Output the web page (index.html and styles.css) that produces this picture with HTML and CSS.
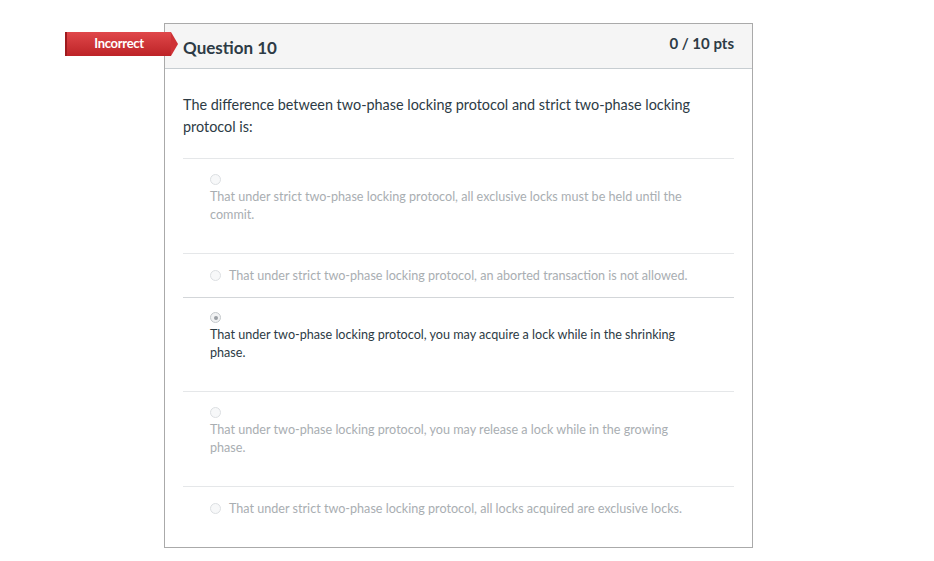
FILE: index.html
```html
<!DOCTYPE html>
<html>
<head>
<meta charset="utf-8">
<link rel="stylesheet" href="styles.css">
</head>
<body>
<div class="question">
  <div class="badge">Incorrect</div>
  <div class="q-header">
    <span class="q-title">Question 10</span>
    <span class="q-pts">0 / 10 pts</span>
  </div>
  <div class="q-body">
    <p class="q-text">The difference between two-phase locking protocol and strict two-phase locking protocol is:</p>
    <div class="answers">
      <div class="answer multi">
        <span class="radio"></span>
        <span class="label">That under strict two-phase locking protocol, all exclusive locks must be held until the commit.</span>
      </div>
      <div class="answer single">
        <span class="radio"></span>
        <span class="label">That under strict two-phase locking protocol, an aborted transaction is not allowed.</span>
      </div>
      <div class="answer multi selected">
        <span class="radio checked"></span>
        <span class="label">That under two-phase locking protocol, you may acquire a lock while in the shrinking phase.</span>
      </div>
      <div class="answer multi">
        <span class="radio"></span>
        <span class="label">That under two-phase locking protocol, you may release a lock while in the growing phase.</span>
      </div>
      <div class="answer single last">
        <span class="radio"></span>
        <span class="label">That under strict two-phase locking protocol, all locks acquired are exclusive locks.</span>
      </div>
    </div>
  </div>
</div>
</body>
</html>
```

FILE: styles.css
```css
html, body {
  margin: 0;
  padding: 0;
  background: #fff;
  font-family: Lato, "Open Sans", sans-serif;
  color: #2d3b45;
}

.question {
  position: relative;
  margin: 23px 0 0 164px;
  width: 587px;
  height: 523px;
  border: 1px solid #aaaaaa;
}

.badge {
  position: absolute;
  left: -100px;
  top: 8px;
  width: 106px;
  height: 24px;
  line-height: 23px;
  box-sizing: border-box;
  padding-left: 0;
  text-align: center;
  color: #fff;
  font-size: 13px;
  font-weight: 700;
  letter-spacing: -0.3px;
  background: linear-gradient(#e0474a, #bd2327);
  border-left: 2px solid #9e1a1e;
}

.badge::after {
  content: "";
  position: absolute;
  right: -7px;
  top: 0;
  width: 0;
  height: 0;
  border-top: 12px solid transparent;
  border-bottom: 12px solid transparent;
  border-left: 7px solid #cf3236;
}

.q-header {
  display: flex;
  justify-content: space-between;
  align-items: flex-start;
  height: 45px;
  box-sizing: border-box;
  padding: 0 18px;
  background: #f5f5f5;
  border-bottom: 1px solid #c7cdd1;
}

.q-title {
  font-size: 17px;
  font-weight: 700;
  margin-top: 13px;
  line-height: 22px;
}

.q-pts {
  font-size: 15px;
  font-weight: 700;
  margin-top: 9px;
  line-height: 20px;
  color: #2d3b45;
}

.q-body {
  padding: 25px 18px 0 18px;
}

.q-text {
  margin: 0 0 20px 0;
  font-size: 14.4px;
  line-height: 22px;
  max-width: 540px;
}

.answer {
  border-top: 1px solid #e5e7e9;
  font-size: 12.6px;
  line-height: 18px;
  color: #a9aeb2;
  padding-left: 27px;
}

.answer.multi {
  padding-top: 11px;
  padding-bottom: 30px;
  height: 53px;
}

.answer.multi .radio {
  display: block;
  margin: 4px 0 3px 0;
}

.answer.multi .label {
  display: block;
  max-width: 480px;
}

.answer.multi.selected {
  padding-top: 10px;
  padding-bottom: 30px;
}

.answer.single {
  display: flex;
  align-items: center;
  height: 44px;
  box-sizing: border-box;
}

.answer.single .radio {
  margin-right: 8px;
}

.answer.last {
  height: 44px;
}

.answer.selected {
  border-top-color: #d3d6d9;
}

.answer.selected .label {
  color: #2d3b45;
}

.radio {
  width: 9px;
  height: 9px;
  border-radius: 50%;
  border: 1px solid #dcdfe2;
  background: #f7f8f9;
  flex: none;
  display: inline-block;
  position: relative;
}

.radio.checked {
  border-color: #c5c9cc;
  background: #f1f2f3;
}

.radio.checked::after {
  content: "";
  position: absolute;
  left: 2.5px;
  top: 2.5px;
  width: 4px;
  height: 4px;
  border-radius: 50%;
  background: #9a9fa4;
}
```
